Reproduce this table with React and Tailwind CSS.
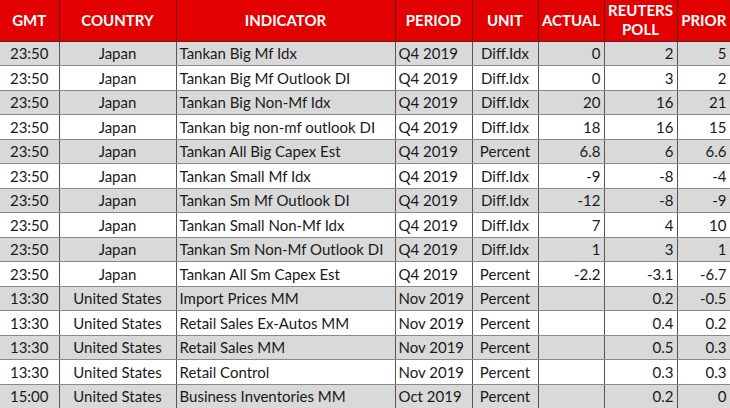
const rows = [
  ["23:50", "Japan", "Tankan Big Mf Idx", "Q4 2019", "Diff.Idx", "0", "2", "5"],
  ["23:50", "Japan", "Tankan Big Mf Outlook DI", "Q4 2019", "Diff.Idx", "0", "3", "2"],
  ["23:50", "Japan", "Tankan Big Non-Mf Idx", "Q4 2019", "Diff.Idx", "20", "16", "21"],
  ["23:50", "Japan", "Tankan big non-mf outlook DI", "Q4 2019", "Diff.Idx", "18", "16", "15"],
  ["23:50", "Japan", "Tankan All Big Capex Est", "Q4 2019", "Percent", "6.8", "6", "6.6"],
  ["23:50", "Japan", "Tankan Small Mf Idx", "Q4 2019", "Diff.Idx", "-9", "-8", "-4"],
  ["23:50", "Japan", "Tankan Sm Mf Outlook DI", "Q4 2019", "Diff.Idx", "-12", "-8", "-9"],
  ["23:50", "Japan", "Tankan Small Non-Mf Idx", "Q4 2019", "Diff.Idx", "7", "4", "10"],
  ["23:50", "Japan", "Tankan Sm Non-Mf Outlook DI", "Q4 2019", "Diff.Idx", "1", "3", "1"],
  ["23:50", "Japan", "Tankan All Sm Capex Est", "Q4 2019", "Percent", "-2.2", "-3.1", "-6.7"],
  ["13:30", "United States", "Import Prices MM", "Nov 2019", "Percent", "", "0.2", "-0.5"],
  ["13:30", "United States", "Retail Sales Ex-Autos MM", "Nov 2019", "Percent", "", "0.4", "0.2"],
  ["13:30", "United States", "Retail Sales MM", "Nov 2019", "Percent", "", "0.5", "0.3"],
  ["13:30", "United States", "Retail Control", "Nov 2019", "Percent", "", "0.3", "0.3"],
  ["15:00", "United States", "Business Inventories MM", "Oct 2019", "Percent", "", "0.2", "0"],
];

const widths = ["w-[59px]", "w-[117px]", "w-[219px]", "w-[77px]", "w-[66px]", "w-[66px]", "w-[73px]", "w-[53px]"];
const align = ["text-center", "text-center", "text-left pl-[3px]", "text-left pl-[3px]", "text-center", "text-right pr-[3px]", "text-right pr-[3px]", "text-right pr-[3px]"];

export default function App() {
  return (
    <div className="w-[730px] h-[408px] overflow-hidden bg-white" style={{ fontFamily: 'Lato, "Open Sans", sans-serif' }}>
      <table className="table-fixed border-collapse w-[730px] text-[15px] text-[#1a1a1a]">
        <colgroup>
          {widths.map((w, i) => (
            <col key={i} className={w} />
          ))}
        </colgroup>
        <thead>
          <tr className="h-[41px] bg-[#e30000] text-white font-bold text-[15px] leading-[20px]">
            <th className="border-r border-b border-[#6b1a1a] text-center">GMT</th>
            <th className="border-x border-b border-[#6b1a1a] text-center">COUNTRY</th>
            <th className="border-x border-b border-[#6b1a1a] text-center">INDICATOR</th>
            <th className="border-x border-b border-[#6b1a1a] text-center">PERIOD</th>
            <th className="border-x border-b border-[#6b1a1a] text-center">UNIT</th>
            <th className="border-x border-b border-[#6b1a1a] text-center">ACTUAL</th>
            <th className="border-x border-b border-[#6b1a1a] text-center leading-[19px]">
              REUTERS
              <br />
              POLL
            </th>
            <th className="border-l border-b border-[#6b1a1a] text-center">PRIOR</th>
          </tr>
        </thead>
        <tbody>
          {rows.map((r, i) => (
            <tr key={i} className={i % 2 === 0 ? "h-[24.5px] bg-[#d9d9d9]" : "h-[24.5px] bg-white"}>
              {r.map((c, j) => (
                <td
                  key={j}
                  className={
                    "border border-[#8a8a8a] border-l-[#555] border-r-[#555] p-0 leading-[22px] whitespace-nowrap " +
                    align[j] +
                    (j === 0 ? " border-l-0" : "")
                  }
                >
                  {c}
                </td>
              ))}
            </tr>
          ))}
        </tbody>
      </table>
    </div>
  );
}
